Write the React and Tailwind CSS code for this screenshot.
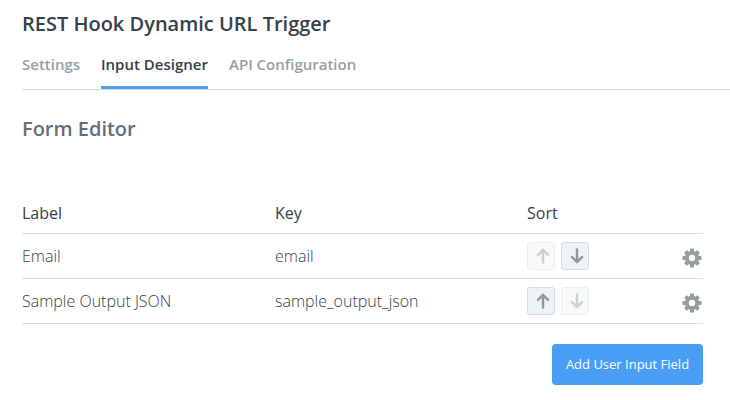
const rows = [
  { label: 'Email', name: 'email', up: false, down: true },
  { label: 'Sample Output JSON', name: 'sample_output_json', up: true, down: false },
];

function Arrow({ down }) {
  return (
    <svg width="14" height="16" viewBox="0 0 14 16" className={down ? 'rotate-180' : ''} fill="none" stroke="#8f989c" strokeWidth="2.5" strokeLinecap="round" strokeLinejoin="round">
      <path d="M7 14.6V2M2 6.8L7 1.8L12 6.8" />
    </svg>
  );
}

function SortButton({ down, enabled }) {
  return (
    <button
      className={`flex h-7 w-7 items-center justify-center rounded-[3px] border border-[#d5dcdf] bg-[#eff3f5] pl-[3px] ${enabled ? '' : 'opacity-45'}`}
    >
      <Arrow down={down} />
    </button>
  );
}

function Gear() {
  return (
    <svg width="20" height="20" viewBox="0 0 20 20">
      <g fill="#949c9f">
        <rect x="8" y="0.4" width="4" height="19.2" rx="0.9" />
        <rect x="0.4" y="8" width="19.2" height="4" rx="0.9" />
        <rect x="8" y="0.7" width="4" height="18.6" rx="0.9" transform="rotate(45 10 10)" />
        <rect x="8" y="0.7" width="4" height="18.6" rx="0.9" transform="rotate(-45 10 10)" />
        <circle cx="10" cy="10" r="7.2" />
      </g>
      <circle cx="10" cy="10" r="3.2" fill="#fff" />
    </svg>
  );
}

export default function App() {
  return (
    <div className="h-[400px] w-[730px] overflow-hidden bg-white pl-[22px] font-['Open_Sans','Noto_Sans',sans-serif] text-[#354047]">
      <h1 className="pt-[10px] text-[20px] leading-7 font-semibold whitespace-nowrap">REST Hook Dynamic URL Trigger</h1>
      <nav className="mt-[13px] flex h-[39px] gap-[21px] border-b border-[#dadddd] text-[15px] leading-[27px] font-semibold whitespace-nowrap text-[#969e9f]">
        <span className="w-[58px]">Settings</span>
        <span className="w-[107px] border-b-[3px] border-[#489df5] text-[#354047]">Input Designer</span>
        <span>API Configuration</span>
      </nav>
      <h2 className="mt-[25px] text-[20px] leading-7 font-semibold text-[#626f77]">Form Editor</h2>
      <div className="mt-[50px] w-[681px] text-base font-light">
        <div className="grid h-[41px] grid-cols-[253px_252px_1fr] border-b border-[#d9dedf] leading-10 font-normal">
          <span>Label</span>
          <span>Key</span>
          <span>Sort</span>
        </div>
        {rows.map((r) => (
          <div key={r.name} className="grid h-[45px] grid-cols-[253px_252px_1fr_21px] items-center border-b border-[#d9dedf]">
            <span>{r.label}</span>
            <span>{r.name}</span>
            <div className="flex gap-1.5">
              <SortButton enabled={r.up} />
              <SortButton down enabled={r.down} />
            </div>
            <div className="pt-1">
              <Gear />
            </div>
          </div>
        ))}
        <div className="flex justify-end pt-5">
          <button className="h-[41px] w-[151px] rounded bg-[#489df5] text-[13px] font-normal whitespace-nowrap text-white">
            Add User Input Field
          </button>
        </div>
      </div>
    </div>
  );
}
